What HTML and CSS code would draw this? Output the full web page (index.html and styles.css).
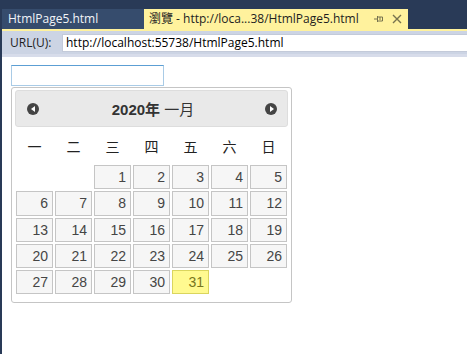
FILE: index.html
```html
<!DOCTYPE html>
<html lang="zh-Hant">
<head>
    <meta charset="UTF-8">
    <title>HtmlPage5.html</title>
    <link rel="stylesheet" href="styles.css">
</head>
<body>
    <div class="ide">
        <div class="topbar"></div>
        <div class="tabs">
            <div class="tab">HtmlPage5.html</div>
            <div class="tab active">
                <span class="tab-title">瀏覽 - http://loca...38/HtmlPage5.html</span>
                <svg class="pin" width="10" height="8" viewBox="0 0 10 8">
                    <path d="M0 4h3M3.5 1v6M3.5 2h5v4h-5M6 2v3" stroke="#77734f" stroke-width="1" fill="none"/>
                </svg>
                <svg class="close" width="10" height="10" viewBox="0 0 10 10">
                    <path d="M1 1L9 9M9 1L1 9" stroke="#77734f" stroke-width="1.4"/>
                </svg>
            </div>
        </div>
        <div class="tabline"></div>
        <div class="urlbar">
            <span class="url-label">URL(U):</span>
            <div class="url-input">http://localhost:55738/HtmlPage5.html</div>
        </div>

        <div class="page">
            <input type="text" class="date-input">
            <div class="datepicker">
                <div class="dp-header">
                    <span class="dp-nav prev"></span>
                    <span class="dp-title">2020年 <span class="month">一月</span></span>
                    <span class="dp-nav next"></span>
                </div>
                <div class="dp-week">
                    <span>一</span><span>二</span><span>三</span><span>四</span><span>五</span><span>六</span><span>日</span>
                </div>
                <div class="dp-days">
                    <span class="empty"></span><span class="empty"></span>
                    <a>1</a><a>2</a><a>3</a><a>4</a><a>5</a>
                    <a>6</a><a>7</a><a>8</a><a>9</a><a>10</a><a>11</a><a>12</a>
                    <a>13</a><a>14</a><a>15</a><a>16</a><a>17</a><a>18</a><a>19</a>
                    <a>20</a><a>21</a><a>22</a><a>23</a><a>24</a><a>25</a><a>26</a>
                    <a>27</a><a>28</a><a>29</a><a>30</a><a class="today">31</a>
                </div>
            </div>
        </div>
    </div>
</body>
</html>
```

FILE: styles.css
```css
*{
    box-sizing: border-box;
}
html, body{
    margin: 0;
    height: 100%;
}
body{
    background: #293a57;
    font-family: "Open Sans", "Noto Sans CJK TC", sans-serif;
    overflow: hidden;
}
.ide{
    margin-left: 2px;
    height: 100%;
    display: flex;
    flex-direction: column;
}
.topbar{
    height: 9px;
}
.tabs{
    height: 20px;
    display: flex;
}
.tab{
    width: 142px;
    padding-left: 6px;
    background: #364c6d;
    color: #f2f4f8;
    font-size: 12px;
    line-height: 20px;
}
.tab.active{
    width: 264px;
    padding-left: 5px;
    background: #fff29d;
    color: #1e1e1e;
    display: flex;
    align-items: center;
}
.pin{
    margin-left: 15px;
}
.close{
    margin-left: 8px;
}
.tabline{
    height: 2px;
    background: #fff29d;
}
.urlbar{
    height: 26px;
    background: #ccd4e4;
    border-bottom: 3px solid #d7dcea;
    display: flex;
    align-items: flex-start;
    padding: 3px 0 0 8px;
}
.url-label{
    color: #1e1e1e;
    font-size: 12px;
    line-height: 18px;
    width: 52px;
}
.url-input{
    flex: 1;
    height: 18px;
    background: #fff;
    border: 1px solid #c3cad9;
    border-right: 0;
    padding-left: 3px;
    font-size: 12px;
    line-height: 16px;
    color: #000;
}
.page{
    flex: 1;
    background: #fff;
    padding: 8px 9px;
}
.date-input{
    display: block;
    width: 153px;
    height: 21px;
    margin: 0 0 1px 0;
    border: 1px solid #a9cbe6;
    border-top-color: #5c9fd4;
    outline: 0;
}
.datepicker{
    width: 281px;
    border: 1px solid #c5c5c5;
    border-radius: 3px;
    padding: 2px 3px 7px;
    background: #fff;
    font-family: "Liberation Sans", Arial, sans-serif;
}
.dp-header{
    height: 37px;
    background: #e9e9e9;
    border: 1px solid #dddddd;
    border-radius: 3px;
    display: flex;
    align-items: center;
    justify-content: space-between;
    padding: 0 10px 0 11px;
}
.dp-title{
    font-family: "Liberation Sans", "Noto Sans CJK TC", sans-serif;
    font-weight: bold;
    font-size: 15px;
    color: #333;
    margin-left: 2px;
}
.dp-title .month{
    font-weight: normal;
}
.dp-nav{
    width: 12px;
    height: 12px;
    border-radius: 50%;
    background: #444;
    position: relative;
}
.dp-nav::after{
    content: "";
    position: absolute;
    top: 3px;
    border-top: 3px solid transparent;
    border-bottom: 3px solid transparent;
}
.dp-nav.prev::after{
    left: 4px;
    border-right: 4px solid #fff;
}
.dp-nav.next::after{
    left: 5px;
    border-left: 4px solid #fff;
}
.dp-week, .dp-days{
    display: grid;
    grid-template-columns: repeat(7, 1fr);
    column-gap: 2px;
    padding: 0 1px;
}
.dp-week{
    height: 37px;
    align-items: center;
    text-align: center;
    font-family: "Noto Sans CJK TC", sans-serif;
    font-size: 14px;
    color: #222;
}
.dp-days{
    grid-auto-rows: 24.25px;
    row-gap: 2px;
    padding-top: 1px;
    padding-bottom: 1px;
}
.dp-days a{
    display: block;
    background: #f6f6f6;
    border: 1px solid #c5c5c5;
    color: #454545;
    font-size: 14px;
    line-height: 22px;
    text-align: right;
    padding-right: 4px;
}
.dp-days a.today{
    background: #fffa90;
    border-color: #dad55e;
    color: #777620;
}
```
